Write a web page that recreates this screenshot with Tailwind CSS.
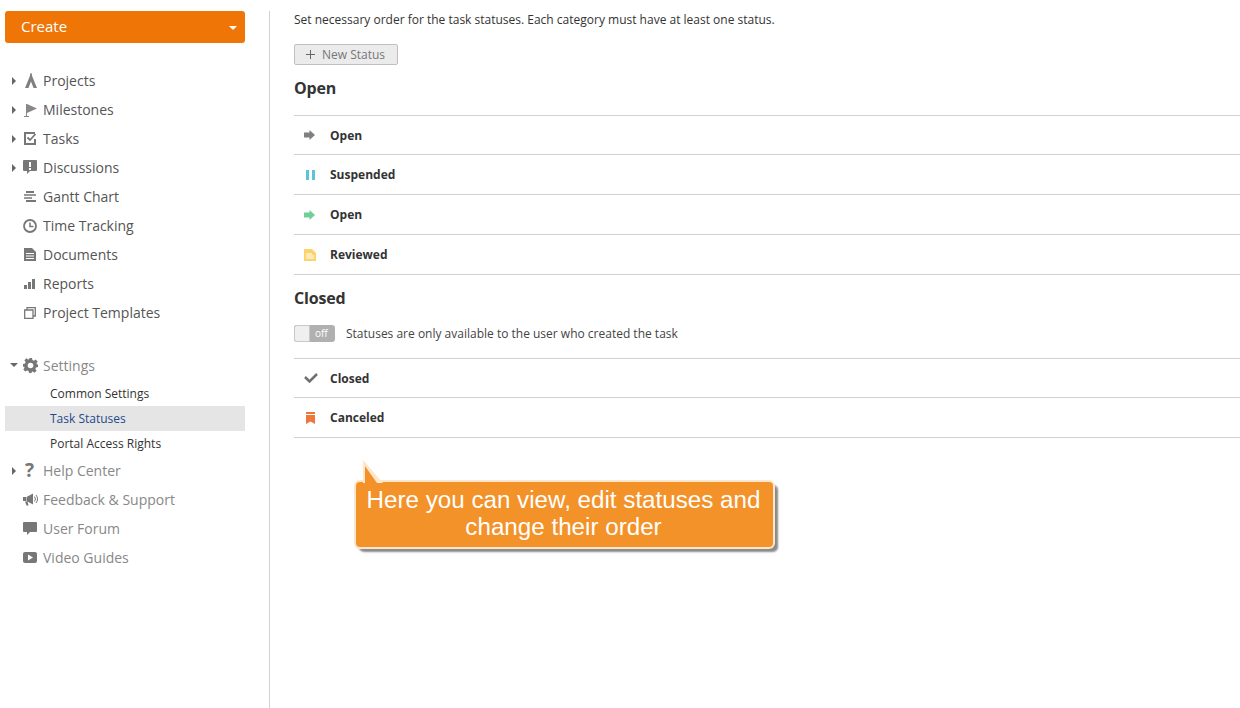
<!doctype html>
<html lang="en">
  <head>
    <meta charset="UTF-8" />
    <title>Task Statuses</title>
    <script src="https://cdn.jsdelivr.net/npm/@tailwindcss/browser@4"></script>
  </head>
  <body class="bg-white">
    <div class="relative flex h-[708px] w-[1240px] overflow-hidden bg-white pt-[11px] font-['Open_Sans',sans-serif] text-[#333]">
      <!-- Sidebar -->
      <aside class="w-[270px] shrink-0 border-r border-[#d1d1d1] pl-[5px] pr-[24px]">
        <button class="flex h-[32px] w-[240px] items-center justify-between rounded-[3px] bg-[#f07507] pb-[2px] pl-[16px] pr-[8px] text-[15px] text-white">
          Create
          <span class="mt-[3px] h-0 w-0 border-x-[4px] border-t-[4px] border-x-transparent border-t-white"></span>
        </button>

        <nav class="mt-[23px] text-[14px] text-[#555]">
          <a class="flex h-[29px] items-center">
            <span class="ml-[7px] h-0 w-0 border-y-[4px] border-l-[4px] border-y-transparent border-l-[#666]"></span>
            <span class="ml-[9px] flex w-[18px] justify-start">
              <svg width="12" height="15" viewBox="0 0 12 15" fill="#808080"><path d="M5.500 0h1l.8 3.500L12 15H8.500L6 8.500 3.500 15H0L4.700 3.500z" /></svg>
            </span>
            Projects
          </a>
          <a class="flex h-[29px] items-center">
            <span class="ml-[7px] h-0 w-0 border-y-[4px] border-l-[4px] border-y-transparent border-l-[#666]"></span>
            <span class="ml-[8px] flex w-[19px] justify-start">
              <svg width="13" height="14" viewBox="0 0 13 14" fill="#888"><path d="M2 1h1v12h2v1H0v-1h2zM3 1l10 4.500L3 10z" /></svg>
            </span>
            Milestones
          </a>
          <a class="flex h-[29px] items-center">
            <span class="ml-[7px] h-0 w-0 border-y-[4px] border-l-[4px] border-y-transparent border-l-[#666]"></span>
            <span class="ml-[8px] flex w-[19px] justify-start">
              <svg width="13" height="13" viewBox="0 0 13 13" fill="none"><path d="M11 1H1v11h10V7" stroke="#777" stroke-width="2" /><path d="M3.500 5.500l2.500 2.500 5.500-6" stroke="#777" stroke-width="1.800" /></svg>
            </span>
            Tasks
          </a>
          <a class="flex h-[29px] items-center">
            <span class="ml-[7px] h-0 w-0 border-y-[4px] border-l-[4px] border-y-transparent border-l-[#666]"></span>
            <span class="ml-[7px] flex w-[20px] justify-start">
              <svg width="14" height="15" viewBox="0 0 14 15"><path d="M1 0h12a1 1 0 0 1 1 1v9a1 1 0 0 1-1 1H7l-3 3v-3H1a1 1 0 0 1-1-1V1a1 1 0 0 1 1-1z" fill="#777" /><path d="M6 2h2v5H6zM6 8h2v2H6z" fill="#fff" /></svg>
            </span>
            Discussions
          </a>
          <a class="flex h-[29px] items-center pl-[19px]">
            <span class="flex w-[19px] justify-start">
              <svg width="12" height="11" viewBox="0 0 12 11" fill="#777"><path d="M2 0h8v2H2zM0 3.300h12v1.400H0zM0 6.300h8v1.400H0zM2 9h10v2H2z" /></svg>
            </span>
            Gantt Chart
          </a>
          <a class="flex h-[29px] items-center pl-[18px]">
            <span class="flex w-[20px] justify-start">
              <svg width="14" height="14" viewBox="0 0 14 14" fill="none"><circle cx="7" cy="7" r="6" stroke="#777" stroke-width="1.800" /><path d="M7 3.500V7.500H10.500" stroke="#777" stroke-width="1.500" /></svg>
            </span>
            Time Tracking
          </a>
          <a class="flex h-[29px] items-center pl-[19px]">
            <span class="flex w-[19px] justify-start">
              <svg width="12" height="13" viewBox="0 0 12 13"><path d="M0 0h8l4 4v9H0z" fill="#777" /><path d="M2 5h8v1H2zM2 7.500h8v1H2zM2 10h8v1H2z" fill="#fff" /></svg>
            </span>
            Documents
          </a>
          <a class="flex h-[29px] items-center pl-[19px]">
            <span class="flex w-[19px] justify-start">
              <svg width="11" height="10" viewBox="0 0 11 10" fill="#777"><path d="M0 6h3v4H0zM4 3h3v7H4zM8 0h3v10H8z" /></svg>
            </span>
            Reports
          </a>
          <a class="flex h-[29px] items-center pl-[19px]">
            <span class="flex w-[19px] justify-start">
              <svg width="12" height="12" viewBox="0 0 12 12" fill="none" stroke="#777" stroke-width="1.300"><path d="M.7 3h8.300v8.300H.7zM3 3V.7h8.300V9H9" /></svg>
            </span>
            Project Templates
          </a>

          <div class="mt-[24px] text-[#888]">
            <a class="flex h-[29px] items-center">
              <span class="ml-[5px] mt-[-2px] h-0 w-0 border-x-[4px] border-t-[4px] border-x-transparent border-t-[#666]"></span>
              <span class="ml-[5px] flex w-[20px] justify-start">
                <svg width="15" height="15" viewBox="0 0 15 15"><path d="M6 0h3l.4 2 1.500.7L12.700 1.500l2 2-1.200 1.800.6 1.500L15 6v3l-2 .4-.6 1.500 1.200 1.800-2 2-1.800-1.200-1.400.6L8.900 15H6l-.4-2-1.500-.6-1.800 1.200-2-2 1.200-1.800L1 8.400 0 9V6l2-.4.6-1.500L1.400 2.300l2-2 1.800 1.200 1.400-.6z" fill="#777" /><circle cx="7.500" cy="7.500" r="2.800" fill="#fff" /></svg>
              </span>
              Settings
            </a>
            <div class="mt-[1px] text-[12px] text-[#333]">
              <a class="flex h-[25px] items-center pl-[45px]">Common Settings</a>
              <a class="flex h-[25px] items-center bg-[#e5e5e5] pl-[45px] text-[#1f4a8c]">Task Statuses</a>
              <a class="flex h-[25px] items-center pl-[45px]">Portal Access Rights</a>
            </div>
            <a class="flex h-[29px] items-center">
              <span class="ml-[7px] h-0 w-0 border-y-[4px] border-l-[4px] border-y-transparent border-l-[#666]"></span>
              <span class="ml-[9px] flex w-[18px] justify-start text-[19px] font-bold leading-none text-[#777]">?</span>
              Help Center
            </a>
            <a class="flex h-[29px] items-center pl-[18px]">
              <span class="flex w-[20px] justify-start">
                <svg width="15" height="13" viewBox="0 0 15 13"><path d="M0 4h3v4H0zM3.500 4L10 .5v11L3.500 8zM2 8.500h2.500L5.500 12.500H3.500z" fill="#777" /><path d="M11.500 3.500a4 4 0 0 1 0 5M13 2a6 6 0 0 1 0 8" fill="none" stroke="#777" /></svg>
              </span>
              Feedback &amp; Support
            </a>
            <a class="flex h-[29px] items-center pl-[18px]">
              <span class="flex w-[20px] justify-start">
                <svg width="14" height="13" viewBox="0 0 14 13" fill="#777"><path d="M1 0h12a1 1 0 0 1 1 1v8a1 1 0 0 1-1 1H7l-3 3v-3H1a1 1 0 0 1-1-1V1a1 1 0 0 1 1-1z" /></svg>
              </span>
              User Forum
            </a>
            <a class="flex h-[29px] items-center pl-[18px]">
              <span class="flex w-[20px] justify-start">
                <svg width="14" height="11" viewBox="0 0 14 11"><rect width="14" height="11" rx="2" fill="#777" /><path d="M5 2.500L10 5.500 5 8.500z" fill="#fff" /></svg>
              </span>
              Video Guides
            </a>
          </div>
        </nav>
      </aside>

      <!-- Main content -->
      <main class="min-w-0 flex-1 pl-[24px]">
        <p class="flex h-[17px] items-center text-[12px] text-[#333]">Set necessary order for the task statuses. Each category must have at least one status.</p>

        <button class="mt-[16px] flex h-[21px] w-[104px] items-center rounded-[2px] border border-[#c0c0c0] bg-[#ebebeb] pl-[11px] text-[12px] text-[#777]">
          <svg class="mr-[7px]" width="9" height="9" viewBox="0 0 9 9" fill="#666"><path d="M4 0h1v4h4v1H5v4H4V5H0V4h4z" /></svg>
          New Status
        </button>

        <h2 class="mt-[12px] flex h-[22px] items-center text-[16px] font-bold tracking-[-0.2px] text-[#333]">Open</h2>

        <ul class="mt-[16px] border-t border-[#d1d1d1] text-[12px] font-bold text-[#333]">
          <li class="flex h-[39px] items-center border-b border-[#d1d1d1] pt-[2px]">
            <span class="mt-[-3px] flex w-[36px] justify-start pl-[10px]">
              <svg width="11" height="10" viewBox="0 0 11 10" fill="#808080"><path d="M0 2.500h5.500V0L11 5l-5.500 5V7.500H0z" /></svg>
            </span>
            Open
          </li>
          <li class="flex h-[40px] items-center border-b border-[#d1d1d1]">
            <span class="flex w-[36px] justify-start pl-[12px]">
              <svg width="9" height="10" viewBox="0 0 9 10" fill="#5bc4d9"><path d="M0 0h3v10H0zM6 0h3v10H6z" /></svg>
            </span>
            Suspended
          </li>
          <li class="flex h-[40px] items-center border-b border-[#d1d1d1]">
            <span class="flex w-[36px] justify-start pl-[10px]">
              <svg width="11" height="10" viewBox="0 0 11 10" fill="#6fcf97"><path d="M0 2.500h5.500V0L11 5l-5.500 5V7.500H0z" /></svg>
            </span>
            Open
          </li>
          <li class="flex h-[40px] items-center border-b border-[#d1d1d1]">
            <span class="flex w-[36px] justify-start pl-[10px]">
              <svg width="12" height="12" viewBox="0 0 12 12"><path d="M0 0h8l4 4v8H0z" fill="#fdd46b" /><path d="M2 4.500h6v1H2zM2 6.500h8v1H2zM2 8.500h8v1H2z" fill="#fff" /></svg>
            </span>
            Reviewed
          </li>
        </ul>

        <h2 class="mt-[12px] flex h-[22px] items-center text-[16px] font-bold tracking-[-0.2px] text-[#333]">Closed</h2>

        <div class="mt-[16px] flex h-[17px] items-center text-[12px] text-[#444]">
          <span class="flex h-[17px] w-[41px] overflow-hidden rounded-[3px] bg-[#b0b0b0]">
            <span class="w-[16px] rounded-l-[3px] border border-[#c8c8c8] bg-[#efefef]"></span>
            <span class="flex-1 pl-[5px] text-[10px] leading-[16px] text-white">off</span>
          </span>
          <span class="ml-[11px]">Statuses are only available to the user who created the task</span>
        </div>

        <ul class="mt-[16px] border-t border-[#d1d1d1] text-[12px] font-bold text-[#333]">
          <li class="flex h-[39px] items-center border-b border-[#d1d1d1] pt-[2px]">
            <span class="mt-[-3px] flex w-[36px] justify-start pl-[10px]">
              <svg width="14" height="10" viewBox="0 0 14 10" fill="none"><path d="M1 4l4.500 4.500L13 1" stroke="#707070" stroke-width="2.500" /></svg>
            </span>
            Closed
          </li>
          <li class="flex h-[40px] items-center border-b border-[#d1d1d1]">
            <span class="flex w-[36px] justify-start pl-[12px]">
              <svg width="9" height="12" viewBox="0 0 9 12" fill="#f0773a"><path d="M0 0h9v2H0zM0 3h9v9L4.500 9.500 0 12z" /></svg>
            </span>
            Canceled
          </li>
        </ul>
      </main>

      <!-- Callout -->
      <div class="absolute left-[356px] top-[482px] h-[65px] w-[417px] rounded-[4px] bg-[#f39229] pr-[2px] pt-[4px] text-center font-['Liberation_Sans',sans-serif] text-[24.2px] leading-[27px] text-white shadow-[0_0_0_2px_#fde6cc,4px_4px_2px_1px_#8a8a8a]">
        <svg class="absolute left-[5px] top-[-22px]" width="24" height="23" viewBox="0 0 24 23"><path d="M2 0L22 23H2z" fill="#fde6cc" /><path d="M4 6L16 23H4z" fill="#f39229" /></svg>
        Here you can view, edit statuses and<br />change their order
      </div>
    </div>
  </body>
</html>
